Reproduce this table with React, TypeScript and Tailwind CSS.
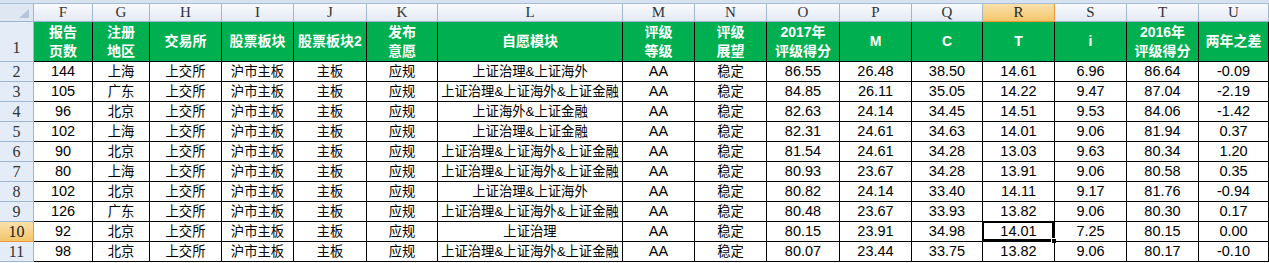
import React from "react";

const cols = ["F","G","H","I","J","K","L","M","N","O","P","Q","R","S","T","U"];
const headers: string[][] = [
  ["报告","页数"],["注册","地区"],["交易所"],["股票板块"],["股票板块2"],["发布","意愿"],["自愿模块"],
  ["评级","等级"],["评级","展望"],["2017年","评级得分"],["M"],["C"],["T"],["i"],["2016年","评级得分"],["两年之差"],
];
const Z = "上证治理&上证海外&上证金融";
const rows: string[][] = [
  ["144","上海","上交所","沪市主板","主板","应规","上证治理&上证海外","AA","稳定","86.55","26.48","38.50","14.61","6.96","86.64","-0.09"],
  ["105","广东","上交所","沪市主板","主板","应规",Z,"AA","稳定","84.85","26.11","35.05","14.22","9.47","87.04","-2.19"],
  ["96","北京","上交所","沪市主板","主板","应规","上证海外&上证金融","AA","稳定","82.63","24.14","34.45","14.51","9.53","84.06","-1.42"],
  ["102","上海","上交所","沪市主板","主板","应规","上证治理&上证金融","AA","稳定","82.31","24.61","34.63","14.01","9.06","81.94","0.37"],
  ["90","北京","上交所","沪市主板","主板","应规",Z,"AA","稳定","81.54","24.61","34.28","13.03","9.63","80.34","1.20"],
  ["80","上海","上交所","沪市主板","主板","应规",Z,"AA","稳定","80.93","23.67","34.28","13.91","9.06","80.58","0.35"],
  ["102","北京","上交所","沪市主板","主板","应规","上证治理&上证海外","AA","稳定","80.82","24.14","33.40","14.11","9.17","81.76","-0.94"],
  ["126","广东","上交所","沪市主板","主板","应规",Z,"AA","稳定","80.48","23.67","33.93","13.82","9.06","80.30","0.17"],
  ["92","北京","上交所","沪市主板","主板","应规","上证治理","AA","稳定","80.15","23.91","34.98","14.01","7.25","80.15","0.00"],
  ["98","北京","上交所","沪市主板","主板","应规",Z,"AA","稳定","80.07","23.44","33.75","13.82","9.06","80.17","-0.10"],
];

const font = { fontFamily: '"Liberation Sans", "Noto Sans CJK SC", sans-serif' } as const;
const isCJK = (s: string) => /[\u4e00-\u9fff]/.test(s);

export default function App() {
  return (
    <div className="w-[1269px] h-[263px] overflow-hidden bg-white text-[14px] text-black" style={font}>
      <div className="h-[4px] bg-[#d6e2f0] border-b border-[#a9bdd6]" />
      <div className="grid grid-cols-[34px_59px_57px_72px_72px_73px_71px_185px_72px_72px_73px_72px_71px_72px_72px_72px_1fr] grid-rows-[18px_40px_repeat(10,20px)]">
        {/* corner */}
        <div className="relative bg-[#dfe7f2] border-r border-b border-[#9eb6ce]">
          <svg className="absolute right-[4px] bottom-[3px]" width="10" height="9" viewBox="0 0 10 9">
            <polygon points="10,0 10,9 0,9" fill="#b4c5dc" />
          </svg>
        </div>
        {cols.map((c) => (
          <div
            key={c}
            className={
              c === "R"
                ? "flex items-center justify-center bg-gradient-to-b from-[#fae0aa] to-[#f3c66a] border-r border-b border-[#f29536] text-[#222]"
                : "flex items-center justify-center bg-gradient-to-b from-[#f8fafd] to-[#e4eaf4] border-r border-b border-[#9eb6ce] text-[#333]"
            }
            style={{ fontFamily: '"Liberation Serif", serif', fontSize: 15 }}
          >
            {c}
          </div>
        ))}
        {/* header row 1 */}
        <div className="flex items-end justify-center bg-[#e4ecf7] border-r border-b border-[#9eb6ce] text-[#333] pb-[1px]" style={{ fontFamily: '"Liberation Serif", serif', fontSize: 16 }}>
          1
        </div>
        {headers.map((h, i) => (
          <div
            key={i}
            className="flex flex-col items-center justify-center bg-[#00b050] border-r border-b border-black text-white font-bold leading-[19px] whitespace-nowrap"
          >
            {h.map((l, j) => (
              <span key={j}>{l}</span>
            ))}
          </div>
        ))}
        {rows.map((r, ri) => {
          const rn = ri + 2;
          return (
            <React.Fragment key={rn}>
              <div
                className={
                  rn === 10
                    ? "flex items-end justify-center bg-gradient-to-b from-[#fae0aa] to-[#f3c66a] border-r border-b border-[#f29536] text-[#222]"
                    : "flex items-end justify-center bg-[#e4ecf7] border-r border-b border-[#9eb6ce] text-[#333]"
                }
                style={{ fontFamily: '"Liberation Serif", serif', fontSize: 16, lineHeight: "19px" }}
              >
                {rn}
              </div>
              {r.map((v, ci) => (
                <div
                  key={ci}
                  className={
                    isCJK(v)
                      ? "relative flex items-center justify-center border-r border-b border-black whitespace-nowrap leading-[19px] text-[13.33px]"
                      : "relative flex items-center justify-center border-r border-b border-black whitespace-nowrap leading-[19px] text-[14.5px]"
                  }
                >
                  {v}
                  {rn === 10 && ci === 12 && (
                    <>
                      <div className="absolute -left-[1px] -top-[1px] right-0 bottom-0 border-2 border-black" />
                      <div className="absolute -right-[3px] -bottom-[3px] w-[6px] h-[6px] bg-black border border-white" />
                    </>
                  )}
                </div>
              ))}
            </React.Fragment>
          );
        })}
      </div>
    </div>
  );
}
